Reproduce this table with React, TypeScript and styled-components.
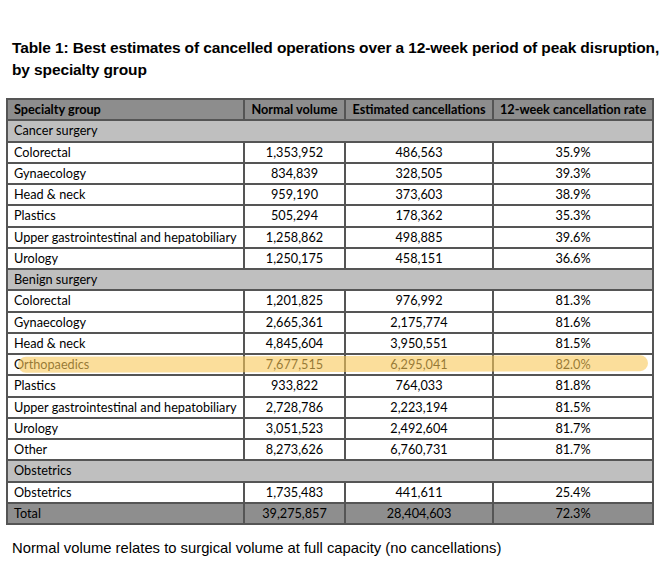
import styled, { createGlobalStyle } from 'styled-components';

type Row = {
  name: string;
  volume: string;
  cancelled: string;
  rate: string;
};

type Section = {
  title: string;
  rows: Row[];
};

const sections: Section[] = [
  {
    title: 'Cancer surgery',
    rows: [
      { name: 'Colorectal', volume: '1,353,952', cancelled: '486,563', rate: '35.9%' },
      { name: 'Gynaecology', volume: '834,839', cancelled: '328,505', rate: '39.3%' },
      { name: 'Head & neck', volume: '959,190', cancelled: '373,603', rate: '38.9%' },
      { name: 'Plastics', volume: '505,294', cancelled: '178,362', rate: '35.3%' },
      { name: 'Upper gastrointestinal and hepatobiliary', volume: '1,258,862', cancelled: '498,885', rate: '39.6%' },
      { name: 'Urology', volume: '1,250,175', cancelled: '458,151', rate: '36.6%' },
    ],
  },
  {
    title: 'Benign surgery',
    rows: [
      { name: 'Colorectal', volume: '1,201,825', cancelled: '976,992', rate: '81.3%' },
      { name: 'Gynaecology', volume: '2,665,361', cancelled: '2,175,774', rate: '81.6%' },
      { name: 'Head & neck', volume: '4,845,604', cancelled: '3,950,551', rate: '81.5%' },
      { name: 'Orthopaedics', volume: '7,677,515', cancelled: '6,295,041', rate: '82.0%' },
      { name: 'Plastics', volume: '933,822', cancelled: '764,033', rate: '81.8%' },
      { name: 'Upper gastrointestinal and hepatobiliary', volume: '2,728,786', cancelled: '2,223,194', rate: '81.5%' },
      { name: 'Urology', volume: '3,051,523', cancelled: '2,492,604', rate: '81.7%' },
      { name: 'Other', volume: '8,273,626', cancelled: '6,760,731', rate: '81.7%' },
    ],
  },
  {
    title: 'Obstetrics',
    rows: [
      { name: 'Obstetrics', volume: '1,735,483', cancelled: '441,611', rate: '25.4%' },
    ],
  },
];

const GlobalStyle = createGlobalStyle`
  body {
    margin: 0;
    background: #fff;
    color: #000;
  }
`;

const Page = styled.div`
  width: 671px;
  height: 568px;
  padding: 37px 0 0 12px;
  box-sizing: border-box;
  font-family: 'Liberation Sans', Arial, sans-serif;
`;

const Title = styled.h1`
  margin: 0 0 17px;
  font-size: 15.5px;
  line-height: 22px;
  font-weight: bold;
  letter-spacing: -0.12px;
`;

const TableWrap = styled.div`
  position: relative;
  margin-left: -6px;
  width: 646px;
`;

const Table = styled.table`
  width: 646px;
  border-collapse: collapse;
  border: 2px solid #333;
  font-family: Lato, 'Open Sans', sans-serif;
  font-size: 12.7px;
  table-layout: fixed;
`;

const Cell = styled.td<{ $align?: 'left' | 'center' }>`
  height: 19.25px;
  padding: 0 6px;
  border: 2px solid #555;
  text-align: ${(p) => p.$align ?? 'center'};
  white-space: nowrap;
  line-height: 19.25px;
`;

const HeadCell = styled(Cell).attrs({ as: 'th' })`
  font-weight: bold;
  background: #8d8d8d;
`;

const SectionCell = styled(Cell)`
  background: #bfbfbf;
  text-align: left;
`;

const TotalRow = styled.tr`
  background: #8e8e8e;
`;

const Highlight = styled.div`
  position: absolute;
  left: 12px;
  top: 258px;
  width: 630px;
  height: 16px;
  border-radius: 8px;
  background: rgba(248, 200, 88, 0.6);
  transform: rotate(-0.15deg);
  pointer-events: none;
`;

const Note = styled.p`
  margin: 15px 0 0;
  font-size: 14.8px;
`;

export default function App() {
  return (
    <Page>
      <GlobalStyle />
      <Title>
        Table 1: Best estimates of cancelled operations over a 12-week period of peak disruption,
        <br />
        by specialty group
      </Title>
      <TableWrap>
        <Table>
          <colgroup>
            <col style={{ width: 237 }} />
            <col style={{ width: 101 }} />
            <col style={{ width: 148 }} />
            <col style={{ width: 160 }} />
          </colgroup>
          <thead>
            <tr>
              <HeadCell $align="left">Specialty group</HeadCell>
              <HeadCell>Normal volume</HeadCell>
              <HeadCell>Estimated cancellations</HeadCell>
              <HeadCell>12-week cancellation rate</HeadCell>
            </tr>
          </thead>
          <tbody>
            {sections.map((section) => (
              <>
                <tr key={section.title}>
                  <SectionCell colSpan={4}>{section.title}</SectionCell>
                </tr>
                {section.rows.map((row) => (
                  <tr key={section.title + row.name}>
                    <Cell $align="left">{row.name}</Cell>
                    <Cell>{row.volume}</Cell>
                    <Cell>{row.cancelled}</Cell>
                    <Cell>{row.rate}</Cell>
                  </tr>
                ))}
              </>
            ))}
            <TotalRow>
              <Cell $align="left">Total</Cell>
              <Cell>39,275,857</Cell>
              <Cell>28,404,603</Cell>
              <Cell>72.3%</Cell>
            </TotalRow>
          </tbody>
        </Table>
        <Highlight />
      </TableWrap>
      <Note>Normal volume relates to surgical volume at full capacity (no cancellations)</Note>
    </Page>
  );
}
